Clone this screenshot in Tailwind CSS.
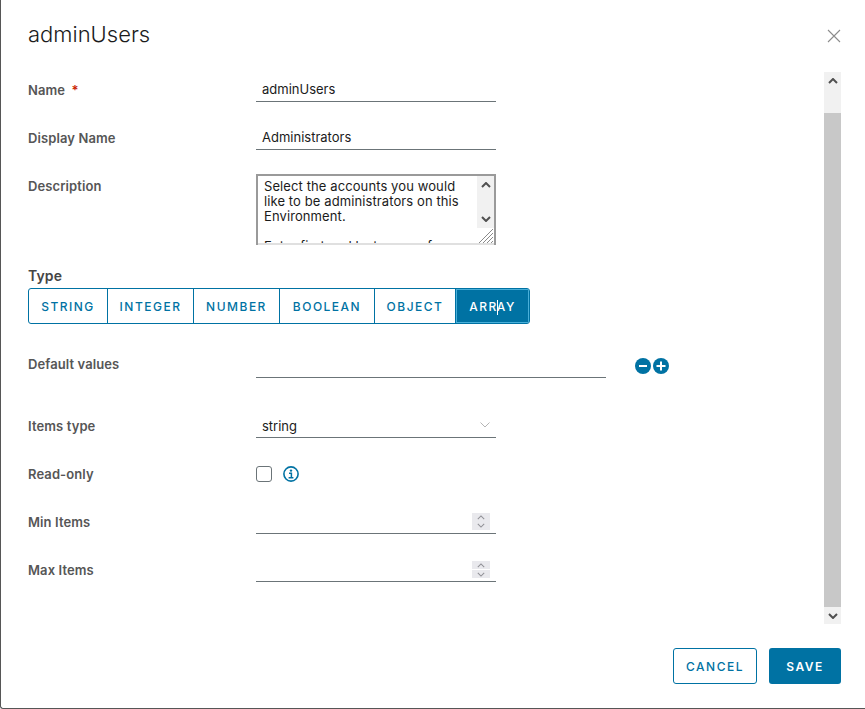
<!DOCTYPE html>
<html lang="en">
<head>
  <meta charset="UTF-8">
  <meta name="viewport" content="width=device-width, initial-scale=1.0">
  <title>adminUsers</title>
  <script src="https://cdn.jsdelivr.net/npm/@tailwindcss/browser@4"></script>
</head>
<body class="bg-white overflow-hidden font-['Inter','Noto_Sans',sans-serif]">
  <div class="w-[865px] h-[709px] bg-white border-l border-b border-[#565656] rounded-bl-[3px] flex flex-col">

    <!-- Header -->
    <header class="h-[72px] pl-[27px] pr-[24px] flex justify-between shrink-0">
      <h1 class="text-[22px] leading-[28px] mt-[20px] font-light text-[#1b1b1b]">adminUsers</h1>
      <button class="mt-[29px] w-[14px] h-[14px] text-[#8c8c8c]">
        <svg viewBox="0 0 14 14" class="w-[14px] h-[14px]" fill="none" stroke="currentColor" stroke-width="1.1"><path d="M1 1l12 12M13 1L1 13"/></svg>
      </button>
    </header>

    <!-- Body -->
    <div class="flex h-[552px] shrink-0 pr-[24px]">
      <form class="flex-1 pl-[27px] text-[13px] font-semibold tracking-[0.1px] text-[#565656]">

        <div class="flex h-[30px]">
          <label class="w-[228px] pt-[10px] leading-[17px]">Name <span class="text-[#c92100] ml-[3px]">*</span></label>
          <div class="w-[240px] h-[30px] border-b border-[#6b7478] pl-[6px] pt-[8px] text-[13px] tracking-normal leading-[18px] font-normal text-[#1b1b1b]">adminUsers</div>
        </div>

        <div class="flex h-[30px] mt-[18px]">
          <label class="w-[228px] pt-[10px] leading-[17px]">Display Name</label>
          <div class="w-[240px] h-[30px] border-b border-[#6b7478] pl-[6px] pt-[8px] text-[13px] tracking-normal leading-[18px] font-normal text-[#1b1b1b]">Administrators</div>
        </div>

        <div class="flex h-[71px] mt-[24px]">
          <label class="w-[228px] pt-[4px] leading-[17px]">Description</label>
          <div class="relative w-[240px] h-[71px] border-2 border-b-0 border-[#9a9a9a] overflow-hidden font-normal">
            <p class="w-[212px] pl-[6px] pt-[3px] text-[13px] leading-[15px] tracking-[0.1px] text-[#1b1b1b]">Select the accounts you would like to be administrators on this Environment.<br><br>Enter first and last name of</p>
            <div class="absolute bottom-0 left-0 right-0 h-[2px] bg-[#e0e0e0]"></div>
            <div class="absolute top-0 right-0 w-[17px] h-[52px] bg-[#f1f1f1] flex flex-col justify-between items-center py-[6px]">
              <svg viewBox="0 0 10 6" class="w-[10px] h-[6px]" fill="none" stroke="#505050" stroke-width="2"><path d="M1 5l4-4 4 4"/></svg>
              <svg viewBox="0 0 10 6" class="w-[10px] h-[6px]" fill="none" stroke="#505050" stroke-width="2"><path d="M1 1l4 4 4-4"/></svg>
            </div>
            <div class="absolute bottom-[2px] right-0 w-[17px] h-[15px] bg-white">
              <svg viewBox="0 0 17 15" class="w-[17px] h-[15px]" fill="none" stroke="#8a8a8a" stroke-width="1"><path d="M2 15L16 1M6 15L16 5M10 15l6-6M14 15l2-2"/></svg>
            </div>
          </div>
        </div>

        <!-- Type -->
        <div class="mt-[22px] text-[14px] leading-[18px] text-[#454545]">Type</div>
        <div class="mt-[3px] flex w-fit h-[36px] border border-[#0072a3] rounded-[3px] overflow-hidden text-[12px] font-medium tracking-[1.5px] text-[#0072a3]">
          <button class="w-[79px] pt-px border-r border-[#0072a3]">STRING</button>
          <button class="w-[86px] pt-px border-r border-[#0072a3]">INTEGER</button>
          <button class="w-[86px] pt-px border-r border-[#0072a3]">NUMBER</button>
          <button class="w-[95px] pt-px border-r border-[#0072a3]">BOOLEAN</button>
          <button class="w-[81px] pt-px border-r border-[#0072a3]">OBJECT</button>
          <button class="w-[73px] pt-px bg-[#0072a3] border border-[#49afd9] text-white">ARR<span class="inline-block w-px h-[15px] -mx-px align-middle bg-white"></span>AY</button>
        </div>

        <div class="flex mt-[30px] h-[24px]">
          <label class="w-[228px] pt-px leading-[18px]">Default values</label>
          <div class="w-[350px] h-[24px] border-b border-[#6b7478]"></div>
          <div class="flex gap-[2px] ml-[29px] mt-[4px] h-[16px]">
            <svg viewBox="0 0 16 16" class="w-[16px] h-[16px]"><circle cx="8" cy="8" r="8" fill="#0072a3"/><path d="M4 8h8" stroke="#fff" stroke-width="2"/></svg>
            <svg viewBox="0 0 16 16" class="w-[16px] h-[16px]"><circle cx="8" cy="8" r="8" fill="#0072a3"/><path d="M3.5 8h9M8 3.5v9" stroke="#fff" stroke-width="2"/></svg>
          </div>
        </div>

        <div class="flex h-[30px] mt-[30px]">
          <label class="w-[228px] pt-[10px] leading-[17px]">Items type</label>
          <div class="w-[240px] h-[30px] border-b border-[#6b7478] pl-[6px] pr-[6px] pt-[9px] text-[13px] tracking-normal leading-[18px] font-normal text-[#1b1b1b] flex justify-between">
            <span>string</span>
            <svg viewBox="0 0 10 6" class="w-[10px] h-[6px] mt-[5px]" fill="none" stroke="#b5b5b5" stroke-width="1"><path d="M.5.5L5 5 9.5.5"/></svg>
          </div>
        </div>

        <div class="flex h-[30px] mt-[18px]">
          <label class="w-[228px] pt-[10px] leading-[17px]">Read-only</label>
          <div class="flex items-center h-[32px] pt-[4px] gap-[11px]">
            <span class="w-[16px] h-[16px] border border-[#6b7478] rounded-[3px]"></span>
            <svg viewBox="0 0 16 16" class="w-[16px] h-[16px]" fill="none"><circle cx="8" cy="8" r="7.1" stroke="#0072a3" stroke-width="1.6"/><circle cx="8" cy="4.6" r="1.2" fill="#0072a3"/><path d="M6 7.2h2.4v4.4M5.6 11.8h4.8" stroke="#0072a3" stroke-width="1.5"/></svg>
          </div>
        </div>

        <div class="flex h-[30px] mt-[18px]">
          <label class="w-[228px] pt-[10px] leading-[17px]">Min Items</label>
          <div class="relative w-[240px] h-[30px] border-b border-[#6b7478]">
            <div class="absolute right-[6px] top-[9px] w-[18px] h-[17px] bg-[#e9e9ed] flex flex-col justify-around items-center">
              <svg viewBox="0 0 10 6" class="w-[8px] h-[5px]" fill="none" stroke="#909096" stroke-width="1.3"><path d="M1 5l4-4 4 4"/></svg>
              <svg viewBox="0 0 10 6" class="w-[8px] h-[5px]" fill="none" stroke="#909096" stroke-width="1.3"><path d="M1 1l4 4 4-4"/></svg>
            </div>
          </div>
        </div>

        <div class="flex h-[30px] mt-[18px]">
          <label class="w-[228px] pt-[10px] leading-[17px]">Max Items</label>
          <div class="relative w-[240px] h-[30px] border-b border-[#6b7478]">
            <div class="absolute right-[6px] top-[9px] w-[18px] h-[17px] flex flex-col gap-px">
              <div class="flex-1 bg-[#e9e9ed] flex items-center justify-center"><svg viewBox="0 0 10 6" class="w-[8px] h-[5px]" fill="none" stroke="#909096" stroke-width="1.3"><path d="M1 5l4-4 4 4"/></svg></div>
              <div class="flex-1 bg-[#e9e9ed] flex items-center justify-center"><svg viewBox="0 0 10 6" class="w-[8px] h-[5px]" fill="none" stroke="#909096" stroke-width="1.3"><path d="M1 1l4 4 4-4"/></svg></div>
            </div>
          </div>
        </div>
      </form>

      <!-- Scrollbar -->
      <div class="w-[17px] bg-[#f1f1f1] flex flex-col shrink-0">
        <div class="h-[41px] pt-[6px] flex justify-center">
          <svg viewBox="0 0 10 6" class="w-[10px] h-[6px]" fill="none" stroke="#505050" stroke-width="2"><path d="M1 5l4-4 4 4"/></svg>
        </div>
        <div class="h-[494px] bg-[#c8c8c8]"></div>
        <div class="flex-1 pt-[6px] flex justify-center">
          <svg viewBox="0 0 10 6" class="w-[10px] h-[6px]" fill="none" stroke="#505050" stroke-width="2"><path d="M1 1l4 4 4-4"/></svg>
        </div>
      </div>
    </div>

    <!-- Footer -->
    <footer class="flex justify-end gap-[12px] pr-[24px] pt-[24px] text-[12px] font-medium tracking-[1.5px]">
      <button class="w-[84px] h-[36px] pt-px border border-[#0072a3] rounded-[3px] text-[#0072a3]">CANCEL</button>
      <button class="w-[72px] h-[36px] pt-px bg-[#0072a3] rounded-[3px] text-white font-semibold">SAVE</button>
    </footer>
  </div>
</body>
</html>
